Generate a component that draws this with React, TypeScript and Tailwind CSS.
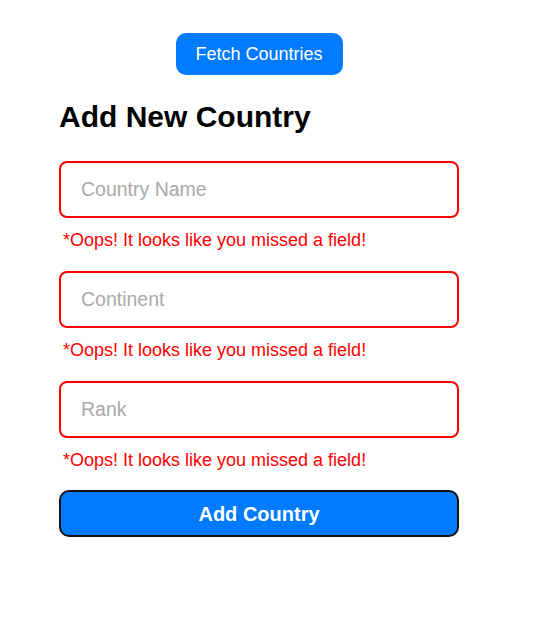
import React from "react";

const fields = ["Country Name", "Continent", "Rank"];

export default function App() {
  return (
    <div className="min-h-[620px] bg-white pl-[59px] pt-[33px]" style={{ fontFamily: '"Liberation Sans", Arial, sans-serif' }}>
      <div className="w-[400px] flex flex-col">
        <div className="flex justify-center">
          <button className="h-[42px] w-[167px] rounded-[10px] bg-[#007bff] text-white text-[18px]">Fetch Countries</button>
        </div>
        <h2 className="mt-[24px] text-[30px] leading-[36px] font-bold text-black">Add New Country</h2>
        <div className="mt-[26px] flex flex-col">
          {fields.map((f) => (
            <div key={f} className="flex flex-col mb-[21px]">
              <input
                placeholder={f}
                className="h-[57px] w-[400px] rounded-[8px] border-2 border-[#ff0000] px-[20px] text-[19.5px] placeholder:text-[#a9a9a9] outline-none"
              />
              <p className="mt-[12px] ml-[4px] text-[18px] leading-[20px] text-[#ff0000]">*Oops! It looks like you missed a field!</p>
            </div>
          ))}
        </div>
        <button className="h-[47px] w-[400px] rounded-[10px] border-2 border-[#111] bg-[#007bff] text-white text-[20px] font-bold -mt-[1px]">Add Country</button>
      </div>
    </div>
  );
}
